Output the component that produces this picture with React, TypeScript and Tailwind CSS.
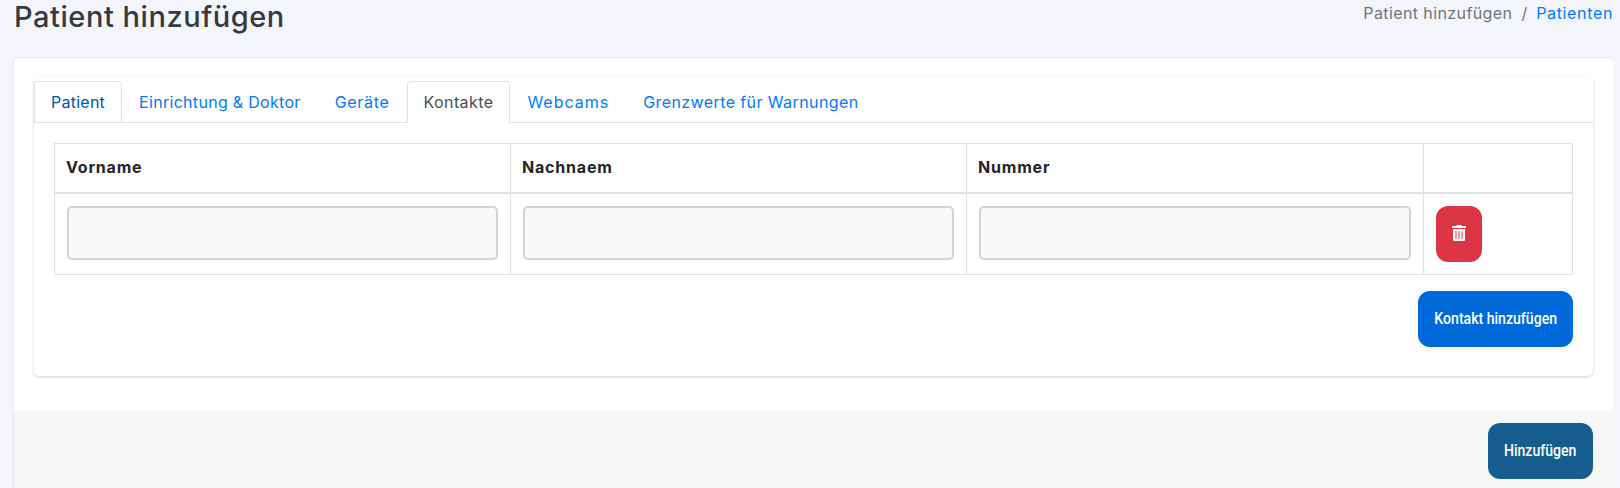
import { FaTrashAlt } from 'react-icons/fa';

const tabs = [
  { label: 'Patient', style: 'border-[#dee2e6] border-b-transparent text-[#0056b3] tracking-[0.25px]' },
  { label: 'Einrichtung & Doktor', style: 'border-transparent text-[#007bff] tracking-[0.3px]' },
  { label: 'Geräte', style: 'border-transparent text-[#007bff] tracking-[0.7px]' },
  { label: 'Kontakte', style: 'border-[#dee2e6] border-b-white text-[#495057] tracking-[0.4px]' },
  { label: 'Webcams', style: 'border-transparent text-[#007bff] tracking-[1px]' },
  { label: 'Grenzwerte für Warnungen', style: 'border-transparent text-[#007bff] tracking-[0.4px]' },
];

const columns = ['Vorname', 'Nachnaem', 'Nummer'];

export default function App() {
  return (
    <div className="h-[488px] overflow-hidden bg-[#f4f5fa] font-['Inter',sans-serif]">
      {/* Page header */}
      <div className="flex h-[57px] justify-between pl-[14px] pr-[7px]">
        <h1 className="text-[29px] leading-[34px] font-medium tracking-[0.55px] text-[#343a40]">Patient hinzufügen</h1>
        <div className="flex h-[26px] items-center text-[16px]">
          <span className="tracking-[0.4px] text-[#6c757d]">Patient hinzufügen</span>
          <span className="px-[9px] text-[#6c757d]">/</span>
          <span className="tracking-[0.65px] text-[#007bff]">Patienten</span>
        </div>
      </div>

      {/* Main card */}
      <div className="mr-[7px] ml-[13px] rounded-t-[5px] border-t border-l border-[#e6e7ec] bg-white">
        <div className="h-[353px] px-[20px] pt-[19px]">
          <div className="h-[299px] rounded-[5px] bg-white shadow-[0_1px_3px_rgba(0,0,0,0.2)]">
            <div className="flex h-[46px] items-end border-b border-[#dee2e6]">
              {tabs.map((t) => (
                <div
                  key={t.label}
                  className={`-mb-px flex h-[42px] items-center rounded-t-[4px] border px-[16px] text-[16px] ${t.style}`}
                >
                  {t.label}
                </div>
              ))}
            </div>

            <div className="px-[20px] pt-[20px]">
              <table className="w-[1518px] table-fixed border-collapse">
                <colgroup>
                  <col className="w-[456px]" />
                  <col className="w-[456px]" />
                  <col className="w-[457px]" />
                  <col className="w-[149px]" />
                </colgroup>
                <thead>
                  <tr className="h-[49px]">
                    {columns.map((c) => (
                      <th
                        key={c}
                        className="border border-b-2 border-[#dee2e6] px-[11px] pb-[2px] text-left text-[16px] font-bold tracking-[0.8px] text-[#212529]"
                      >
                        {c}
                      </th>
                    ))}
                    <th className="border border-b-2 border-[#dee2e6]" />
                  </tr>
                </thead>
                <tbody>
                  <tr className="h-[82px]">
                    {columns.map((c) => (
                      <td key={c} className="border border-[#dee2e6] px-[12px] pb-[2px]">
                        <input
                          aria-label={c}
                          className="block h-[54px] w-full rounded-[5px] border-2 border-[#ced4da] bg-[#f8f9fa]"
                        />
                      </td>
                    ))}
                    <td className="border border-[#dee2e6] px-[12px]">
                      <button className="flex h-[56px] w-[46px] items-center justify-center rounded-[12px] bg-[#dc3545] pb-[2px] text-white">
                        <FaTrashAlt size={16} />
                      </button>
                    </td>
                  </tr>
                </tbody>
              </table>
              <div className="mt-[16px] flex w-[1519px] justify-end">
                <button className="h-[56px] w-[155px] rounded-[12px] bg-[#0069d9] font-['Roboto',sans-serif] text-[16px] font-medium text-white">
                  <span className="inline-block scale-x-[0.88] whitespace-nowrap">Kontakt hinzufügen</span>
                </button>
              </div>
            </div>
          </div>
        </div>

        {/* Footer */}
        <div className="flex h-[78px] justify-end bg-[#f6f6f6] pt-[12px] pr-[20px]">
          <button className="h-[56px] w-[105px] rounded-[12px] bg-[#155d8e] font-['Roboto',sans-serif] text-[16px] font-medium text-white">
            <span className="inline-block scale-x-[0.88] whitespace-nowrap">Hinzufügen</span>
          </button>
        </div>
      </div>
    </div>
  );
}
